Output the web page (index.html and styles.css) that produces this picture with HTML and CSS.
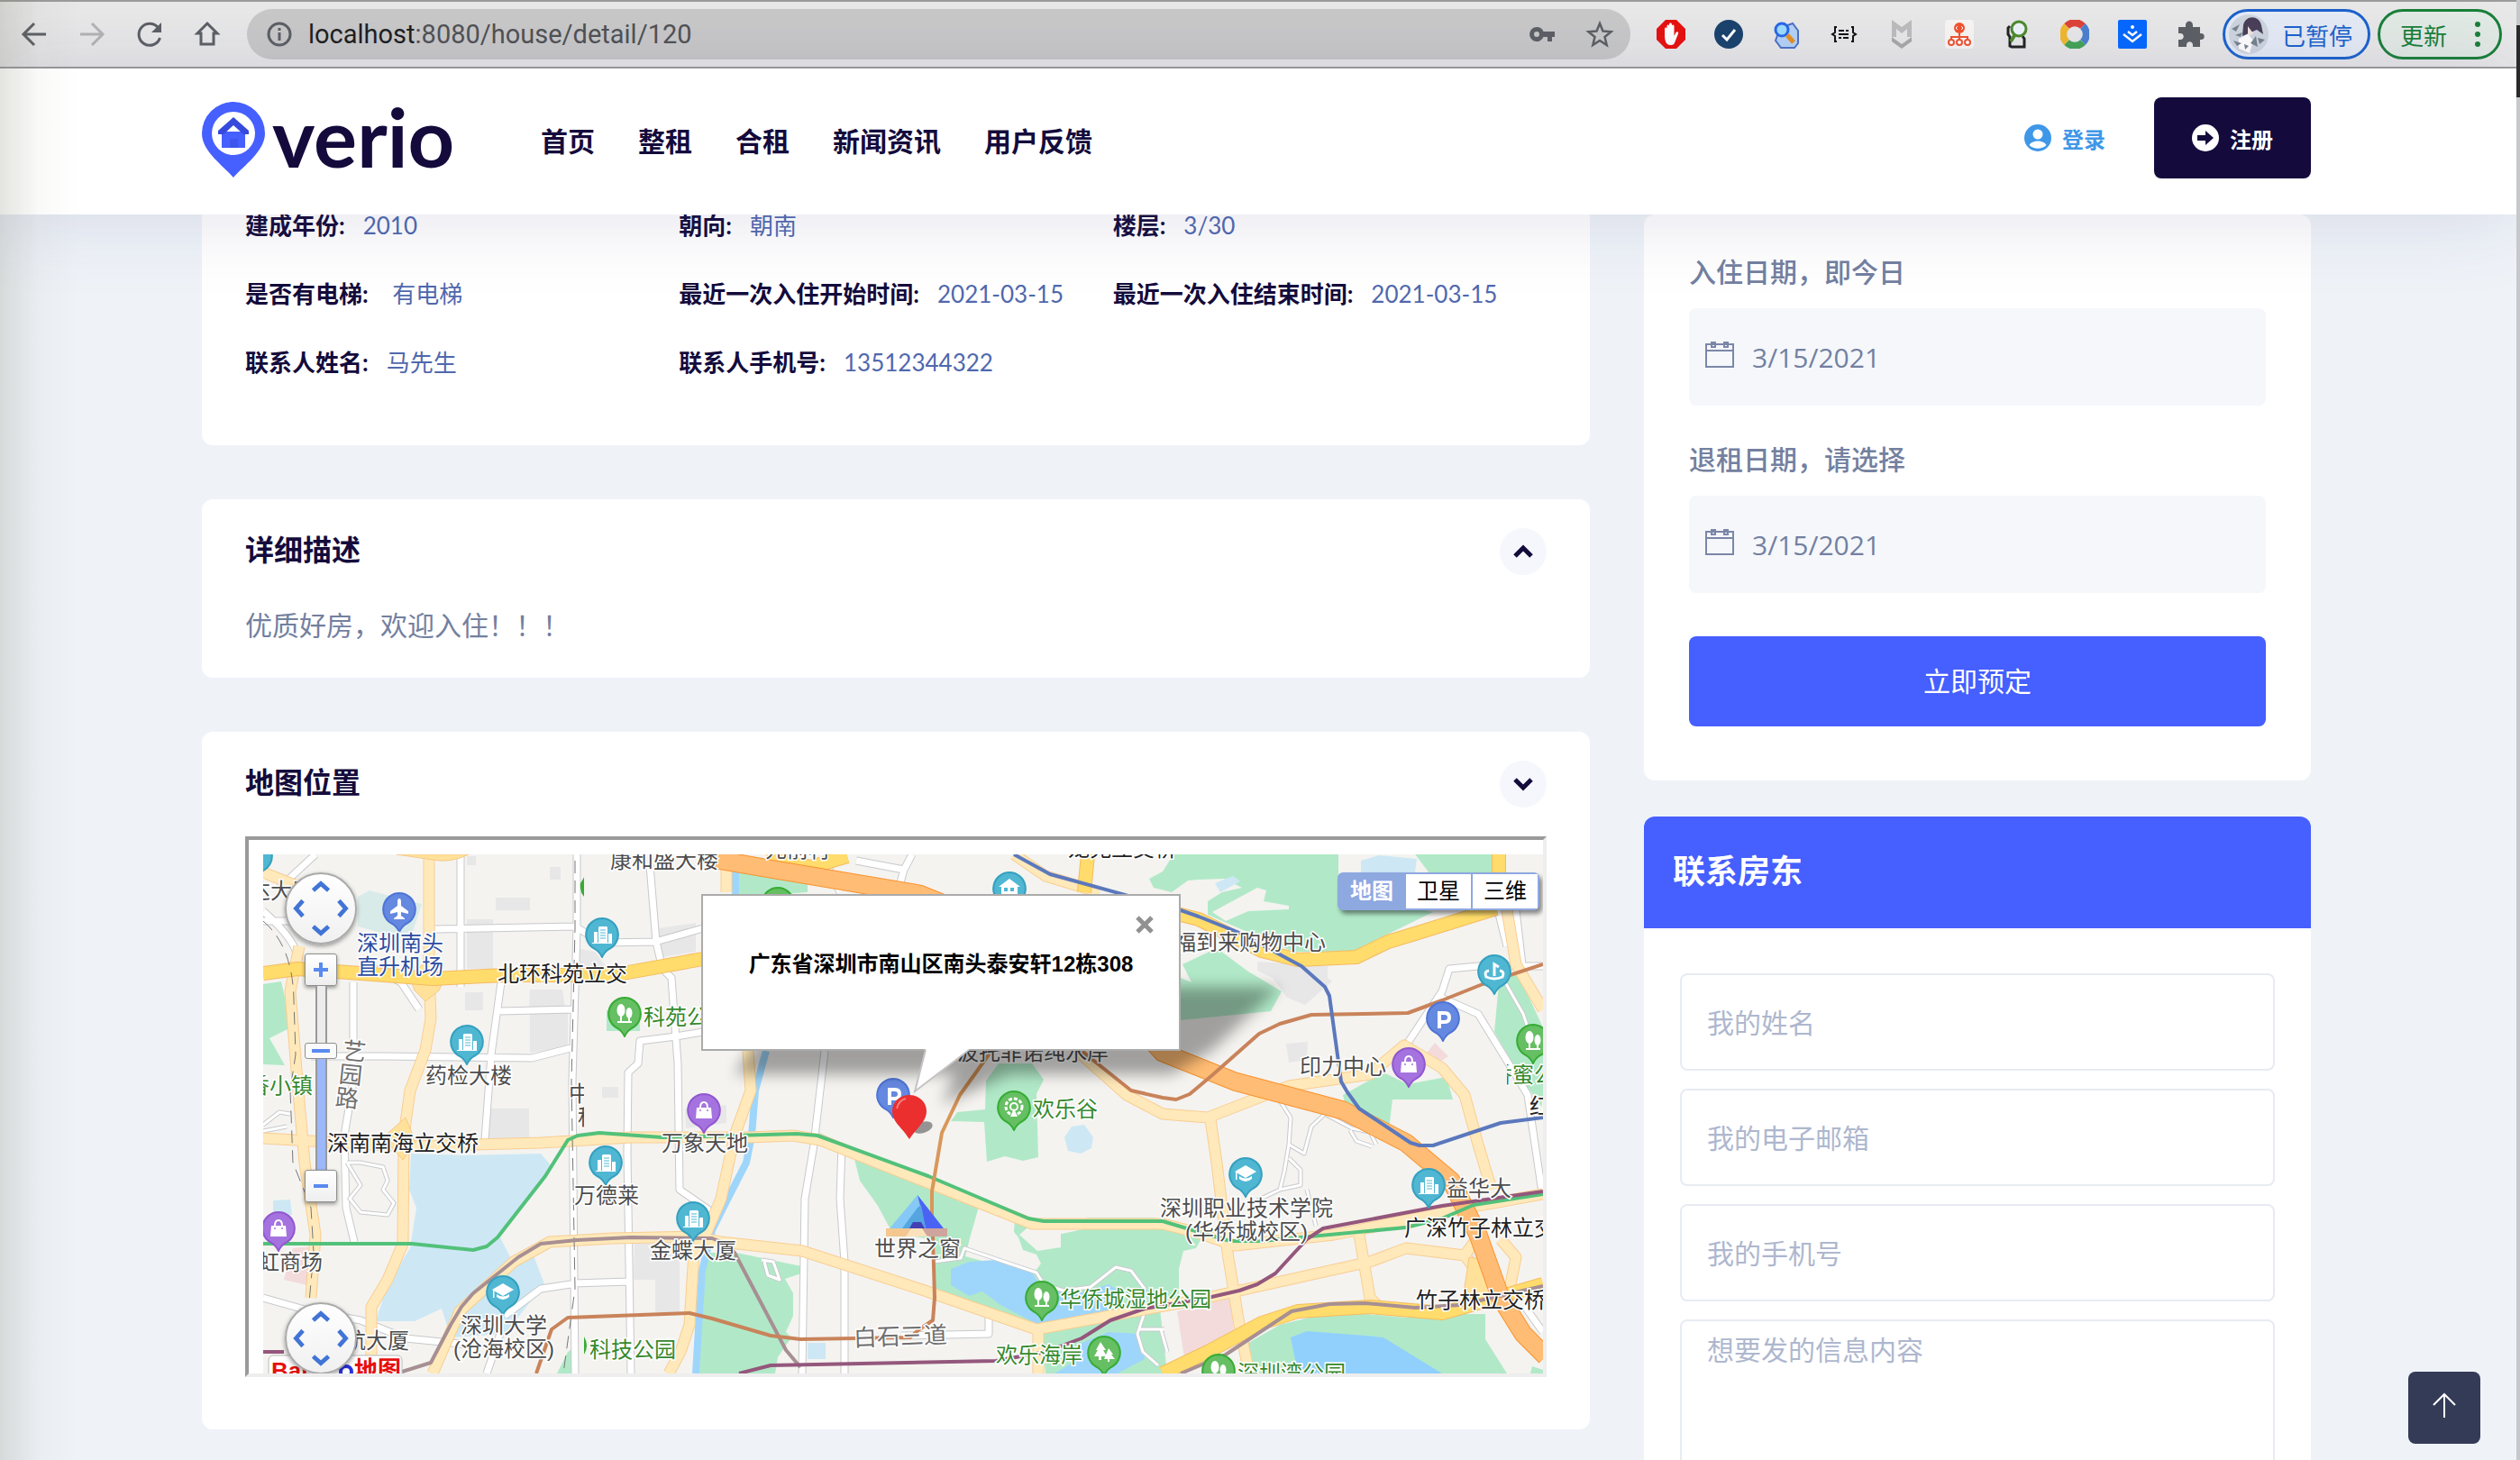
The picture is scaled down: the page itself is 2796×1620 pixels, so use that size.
FILE: index.html
```html
<!DOCTYPE html>
<html lang="zh-CN">
<head>
  <meta charset="utf-8">
  <title>Overio - 房屋详情</title>
  <meta name="viewport" content="width=device-width, initial-scale=1">
  <link rel="stylesheet" href="styles.css">
</head>
<body>
<div class="browser">
  <button class="tool" aria-label="后退"><svg viewBox="0 0 32 32"><path d="M29 16H5M16 4L4 16l12 12" fill="none" stroke="#5c5f63" stroke-width="3"/></svg></button>
  <button class="tool" aria-label="前进"><svg viewBox="0 0 32 32"><path d="M3 16h24M16 4l12 12-12 12" fill="none" stroke="#b3b4b6" stroke-width="3"/></svg></button>
  <button class="tool" aria-label="刷新"><svg viewBox="0 0 32 32"><path d="M26 9.500A12 12 0 1 0 27.500 20" fill="none" stroke="#5c5f63" stroke-width="3"/><path d="M29 3v11H18z" fill="#5c5f63"/></svg></button>
  <button class="tool" aria-label="主页"><svg viewBox="0 0 32 32"><path d="M16 4L5 15h4v12h14V15h4z" fill="none" stroke="#5c5f63" stroke-width="3"/></svg></button>
  <div class="address">
    <svg class="icon" viewBox="0 0 32 32"><circle cx="16" cy="16" r="12" fill="none" stroke="#5c5f63" stroke-width="3"/><path d="M16 14v9M16 9v3" stroke="#5c5f63" stroke-width="3"/></svg>
    <span class="url"><b>localhost</b>:8080/house/detail/120</span>
    <svg class="icon" viewBox="0 0 32 32"><path d="M10 8a8 8 0 1 0 7.500 11H22v5h5v-5h3v-6H17.500A8 8 0 0 0 10 8zm0 5a3 3 0 1 1 0 6 3 3 0 0 1 0-6z" fill="#5c5f63"/></svg>
    <svg class="icon star" viewBox="0 0 32 32"><path d="M16 4l3.500 8.500 9 .7-7 5.800 2.200 9L16 23l-7.700 5 2.200-9-7-5.800 9-.7z" fill="none" stroke="#5c5f63" stroke-width="2.500"/></svg>
  </div>
  <div class="extensions">
    <svg viewBox="0 0 32 32"><path d="M10 0h12l10 10v12L22 32H10L0 22V10z" fill="#e8100c"/><path d="M9 17V10c0-2 2.500-2 2.500 0v5V7c0-2 2.500-2 2.500 0v8V5c0-2 3-2 3 0v10V7c0-2 2.500-2 2.500 0v11l2-4c1-1.500 3.500-1 2.500 1.500l-4 10C19 28 17 28 15 28c-4 0-6-4-6-11z" fill="#fff"/></svg>
    <svg viewBox="0 0 32 32"><circle cx="16" cy="16" r="16" fill="#19426c"/><path d="M9 17l5 5 9-11" fill="none" stroke="#fff" stroke-width="3"/></svg>
    <svg viewBox="0 0 32 32"><path d="M9 9l14-5 6 8v14l-4 5H10l-6-8z" fill="#b5d3f7" stroke="#4c72c4" stroke-width="2"/><circle cx="11" cy="11" r="7" fill="#9fdcff" stroke="#2868e8" stroke-width="3"/><path d="M17 17l7 8" stroke="#e79020" stroke-width="5"/></svg>
    <svg viewBox="0 0 32 32"><path d="M8 8H6v6l-3 2 3 2v6h2M24 8h2v6l3 2-3 2v6h-2M10 12h6M18 12h3M10 16h11M10 20h3M15 20h6" fill="none" stroke="#111" stroke-width="2"/></svg>
    <svg viewBox="0 0 32 32"><path d="M5 0l11 8L27 0v19h-5V10l-6 5-6-5v9H5z" fill="#bdbdbd"/><path d="M5 19l11 8 11-8v5l-11 8-11-8z" fill="#a9a9a9"/></svg>
    <svg viewBox="0 0 32 32"><rect width="32" height="32" rx="4" fill="#f9f7f4"/><circle cx="16" cy="9" r="6" fill="#f3532e"/><path d="M16 14v9M7 23v-4h18v4" fill="none" stroke="#f3532e" stroke-width="2"/><g fill="#fff" stroke="#f3532e" stroke-width="2"><circle cx="7" cy="25" r="3"/><circle cx="16" cy="25" r="3"/><circle cx="25" cy="25" r="3"/></g><path d="M14 7l-2 2 2 2M18 7l2 2-2 2" fill="none" stroke="#fff"/></svg>
    <svg viewBox="0 0 32 32"><path d="M8 7L6 9v7l2 3v10l2 1h14v-9l-2-3" fill="none" stroke="#222" stroke-width="3"/><path d="M14 16l-5 8" stroke="#4b8b2a" stroke-width="4"/><circle cx="18" cy="10" r="8" fill="#edf4fa" stroke="#4b8b2a" stroke-width="3"/></svg>
    <svg viewBox="0 0 32 32" fill="none" stroke-width="8"><path d="M7 7a12.500 12.500 0 0 1 18 0" stroke="#df4238"/><path d="M25 7a12.500 12.500 0 0 1 0 18" stroke="#4c80cf"/><path d="M25 25a12.500 12.500 0 0 1-18 0" stroke="#44a355"/><path d="M7 25A12.500 12.500 0 0 1 7 7" stroke="#f2b92e"/></svg>
    <svg viewBox="0 0 32 32"><rect width="32" height="32" rx="2" fill="#0468ff"/><path d="M6 16l10 8 10-8M11 13l5 4 5-4" fill="none" stroke="#fff" stroke-width="2.500"/><circle cx="16" cy="8" r="2" fill="#fff"/></svg>
    <svg viewBox="0 0 32 32"><path d="M3 8h8V6c0-6 8-6 8 0v2h8v7h1c5 0 5 7 0 7h-1v8h-8v-2c0-5-7-5-7 0v2H3v-8h2c5 0 5-7 0-7H3z" fill="#5c5f63"/></svg>
  </div>
  <button class="pill paused">
    <svg viewBox="0 0 46 46"><circle cx="23" cy="23" r="22" fill="#cfd6df"/><path d="M17 13c2-11 17-12 20 0l2 10-7-5-9 4-7 3z" fill="#493f58"/><path d="M22 14l6 8-6 4z" fill="#f4e4e2"/><path d="M12 28l10-5 6 7-4 14-12-5z" fill="#fff"/><path d="M4 17l9-5-4 8zM6 30l9 3-5 3zM25 33l6-8 2 12zM8 24l8-3-2 5zM33 27l8 2-6 5zM18 34l5 2-4 4z" fill="#77838d"/></svg>
    已暂停
  </button>
  <button class="pill update">更新<svg viewBox="0 0 8 32"><circle cx="4" cy="5" r="3"/><circle cx="4" cy="16" r="3"/><circle cx="4" cy="27" r="3"/></svg></button>
</div>

<header class="header">
  <a class="logo" href="#" aria-label="Overio">
    <svg viewBox="0 0 70 84"><path d="M35 0a35 35 0 0 1 35 35c0 20-24 36-35 49C24 71 0 55 0 35A35 35 0 0 1 35 0z" fill="#465fff"/><circle cx="35" cy="35" r="24" fill="#fff"/><path d="M22 33h26v18H22z" fill="#465fff"/><path d="M35 17l17 15v4h-6L35 26 24 36h-6v-4z" fill="#3649dc"/><path d="M31 41h9v10h-9z" fill="#3f55ee"/></svg>
    <span>verio</span>
  </a>
  <nav class="nav">
    <a href="#">首页</a>
    <a href="#">整租</a>
    <a href="#">合租</a>
    <a href="#">新闻资讯</a>
    <a href="#">用户反馈</a>
  </nav>
  <div class="account">
    <a class="login" href="#"><svg viewBox="0 0 30 30"><circle cx="15" cy="15" r="15" fill="#3f97e8"/><circle cx="15" cy="11" r="5.500" fill="#fff"/><path d="M5.500 23c3-6 16-6 19 0-5 5-14 5-19 0z" fill="#fff"/></svg>登录</a>
    <a class="register" href="#"><svg viewBox="0 0 30 30"><circle cx="15" cy="15" r="15" fill="#fff"/><path d="M6 12h9V7l9 8-9 8v-5H6z" fill="#140b3c"/></svg>注册</a>
  </div>
</header>

<main class="page">
  <div class="content">
    <section class="card info">
      <dl>
        <div><dt>建成年份:</dt><dd>2010</dd></div>
        <div><dt>朝向:</dt><dd>朝南</dd></div>
        <div><dt>楼层:</dt><dd>3/30</dd></div>
        <div><dt>是否有电梯:</dt><dd>&nbsp;有电梯</dd></div>
        <div><dt>最近一次入住开始时间:</dt><dd>2021-03-15</dd></div>
        <div><dt>最近一次入住结束时间:</dt><dd>2021-03-15</dd></div>
        <div><dt>联系人姓名:</dt><dd>马先生</dd></div>
        <div><dt>联系人手机号:</dt><dd>13512344322</dd></div>
      </dl>
    </section>

    <section class="card">
      <div class="card-head">
        <h2>详细描述</h2>
        <button class="toggle" aria-label="收起"><svg viewBox="0 0 24 24"><path d="M3 17l9-9 9 9" fill="none" stroke="#140b3c" stroke-width="5"/></svg></button>
      </div>
      <p class="desc">优质好房，欢迎入住！！！</p>
    </section>

    <section class="card">
      <div class="card-head">
        <h2>地图位置</h2>
        <button class="toggle" aria-label="展开"><svg viewBox="0 0 24 24"><path d="M3 7l9 9 9-9" fill="none" stroke="#140b3c" stroke-width="5"/></svg></button>
      </div>
      <div class="map-frame">
        <div class="map">
          <svg class="map-canvas" viewBox="292 948 1420 576" preserveAspectRatio="xMinYMin slice">
            <defs>
              <path id="white" d="M511 948V1095M470 1100L483 1100M483 1031L638 1028 668 1046 727 1045 780 1030M721 960L728 1045 735 1075 745 1085 752 1180 754 1320 790 1345M392 1090V1200L382 1260 384 1340 393 1378M556 1090L545 1170 538 1265M555 1122L635 1120M345 1172L425 1172 590 1174 633 1163M780 1145L750 1150 710 1155 708 1180 697 1190 696 1280 700 1524M637 1424L698 1422M560 1460L600 1430 640 1424M540 1524L555 1480M292 1440L345 1455 400 1465 450 1485 500 1490 520 1492M915 1166L903 1270 893 1330 890 1524M934 1270L932 1330 937 1400V1524M905 1260L945 1278M1000 1482L1097 1480V1460M950 955L1003 965 1012 948M1003 965L996 990M920 965L932 990M1560 1160L1600 1100 1608 1075 1640 1072H1712M1595 1105L1640 1125 1680 1190 1695 1215 1712 1330M1662 1010L1672 1050M1682 1010L1690 1080M1692 1450L1712 1478M350 948L310 985M292 1022H330M292 1011Q325 1040 330 1060M640 948V1030L635 1200 638 1524M402 1068L445 1090 465 1120"/>
              <path id="lane" d="M1418 1218L1432 1240 1430 1270 1425 1300 1420 1320 1395 1332M1430 1270L1447 1280 1455 1250 1470 1236 1500 1252 1520 1256 1527 1270M1498 1254L1505 1266 1522 1272M1430 1285L1443 1298V1315L1420 1320M1036 1400L1066 1396 1070 1385 1120 1402 1150 1412 1158 1425 1180 1432 1210 1428 1238 1406 1255 1410 1270 1430 1268 1445M385 1290L400 1290 425 1295 430 1310 425 1320 437 1335 430 1348 400 1345 388 1330 400 1315 385 1290M292 1248L310 1234 322 1236M292 1255L318 1250M845 1398L858 1400 865 1420 852 1415 848 1400M1272 1450L1262 1480 1268 1500 1285 1515M1264 1475H1292M1288 1475L1295 1500M1670 1090L1690 1125 1705 1170M1450 1320L1460 1360"/>
              <path id="pale" d="M476 948V1080L478 1130 472 1165 455 1210 448 1260 447 1380 430 1420 412 1450V1510M332 1050L322 1100 330 1200 338 1290 350 1370 345 1440M292 1263L450 1272 600 1268 700 1262 830 1262 880 1260 910 1265 1145 1358H1290L1330 1368 1370 1382 1480 1370 1640 1338 1712 1325M292 968L335 985M480 1524L510 1455 570 1400 610 1378 680 1374 770 1372 800 1378 890 1388 1020 1430 1150 1475 1330 1442 1520 1400 1560 1385 1625 1393M830 1166L833 1210 815 1260 800 1330 785 1365 770 1390 765 1470 755 1500 742 1524M1152 1475V1524M1343 1242L1350 1290 1362 1390 1375 1470 1386 1524M1195 1166L1250 1215 1290 1236 1340 1240 1430 1205 1520 1192 1558 1160 1600 1185 1625 1215 1640 1270 1655 1320M1508 1370L1520 1440 1530 1450M1672 1010L1682 1070 1712 1120M806 948V990M1625 1393L1640 1372M1625 1393L1645 1420 1665 1430M1665 1375L1682 1395 1675 1430M1125 948L1160 972 1220 990"/>
              <path id="main" d="M292 1080L330 1075 400 1080 480 1086 560 1082 680 1082 780 1064M1290 1010L1330 1020 1400 1055 1440 1065 1505 1062 1540 1045 1570 1036 1660 1008M1663 948V970M1207 948L1203 990M850 952L900 962 940 950M1290 1524L1340 1500 1400 1468 1440 1455 1520 1450 1600 1457 1650 1443 1712 1425"/>
              <path id="express" d="M790 953L860 965 1020 992 1190 1060 1290 1168 1370 1200 1490 1232 1560 1268 1610 1310 1640 1370 1665 1440 1690 1480 1715 1505"/>
              <filter id="soft" x="-20%" y="-50%" width="140%" height="200%"><feGaussianBlur stdDeviation="8"/></filter>
              <g id="pin"><path d="M0-18A18 18 0 0 1 7 16.500Q3 19 0 25-3 19-7 16.500A18 18 0 0 1 0-18z"/></g>
              <g id="building" fill="#fff"><path d="M-3-9h8l1 1V9H-4V-8zM-9-3h4V9h-4zM7-1h4V9H7zM-11 9h22v1h-22z"/><path d="M-2-5h6M-2-2h6M-2 1h6M-2 4h6" stroke="#50b7d3"/></g>
              <g id="bag"><path d="M-8-3H8L9 9H-9z" fill="#fff"/><path d="M-4-3c0-8 8-8 8 0" fill="none" stroke="#fff" stroke-width="2"/><circle cx="-4" cy="0" r="1" fill="#a573df"/><circle cx="4" cy="0" r="1" fill="#a573df"/></g>
              <g id="tree" fill="#fff"><ellipse cx="-4" cy="-4" rx="4.500" ry="7"/><ellipse cx="5" cy="-1" rx="3.500" ry="6"/><path d="M-5 0h2v8h7V3h2v5h2v2H-8V8h3z"/></g>
              <g id="school" fill="#fff"><path d="M0-10L12-3 0 4-12-3z"/><path d="M-7 2q7 5 14 0v3q-7 6-14 0zM-11-2h1.500v8H-11z"/></g>
              <clipPath id="tile"><path d="M292 948h356v576H292z"/></clipPath>
              <clipPath id="tile2"><path d="M1672 1160h40v60h-40z"/></clipPath>
            </defs>

            <path d="M292 948h1420v576H292z" fill="#f4f3f0"/>
            <!-- built-up blocks -->
            <path fill="#e7e7e8" d="M518 1020h29v55h-29zM550 996h38v14h-38zM516 1101h20v20h-20zM588 1098h36l3 20h-40zM588 1122h42v40l-42 6zM542 1230h45v34h-45zM730 1030l42-6v32l-38 6zM640 1052l20 4 15 20h-35zM704 1380h50v76h-27v-36h-24zM610 962h12v14h-12zM518 950h10v10h-10zM1395 1067l78 5v13l5 4-30 26-20-8-16-22-17-8zM1427 1158l24-2-1 20-20 3zM1630 1378l8 20-6 4zM668 1206h18v12h-18zM760 1230l46-4v20l-45 6z"/>
            <!-- parks -->
            <path fill="#b1e9c8" d="M292 1092l20-3 9 40v12l-22 11 17 30-24-1zM673 1121h37v23h-37zM816 960l80 15v15l-80 6zM947 1282l12 0 129 50-12 42-5 20 75 20 9-12-5-10-15-5-5-14-5-6 1-14 10-5 24 25 46-10v-12l74 0 56 18-9 16-14 3-5 20 0 42-140 28-130-42v-60l-48-8-16-30-20-28zM1108 1180h37l13 18-8 16 2 70-17 4-20-5-20 6-3-44-37-1 7-10 31-3 1-32zM1155 1480l132-28 8 72h-135zM780 1390l37 0 72 15v8l-18 6 9 16v25l-8 18 6 6-15 22-3 18h-85zM786 1410h20l-20 114h-14zM630 1500l-12 24h18V1496zM1302 948h183v37l75 20 30 7-90 44h-65l-95-41v-15l16-10 22-5-20-10-28 1-12 1-18 13-20-5-5-10 15-8zM1570 948h85l5 20h-75zM1310 1085l12 5-10-20 38-18 35 26 37 22-12 22-20 2-80 8zM1490 1215l45-25 27 13 43-8 7 25h-67l-5 42-45-25zM1664 1080l20 0 28 60v90l-22-30-32-55zM1385 1490l35-20 60-15 80 7 40-4h48v28l24 38h-285zM1700 1516l12 4v4h-14z"/>
            <path fill="#f4f3f0" d="M1345 1012l50-27 10 3-3 12 28 5v4l-45 2-25 11zM1485 948h85l15 20h-30l-25-5-45 5zM1145 1358l32 4v22l-26 4-20-18z"/>
            <path fill="#d8ebe9" d="M397 995l13-7 45 12 13 3-11 34-17 3-43-12z"/>
            <path fill="#f3dbdb" d="M325 1385l20-2v44l-30-7zM1306 1455l60-15 3 40-54 33zM1592 1157l15 15-12 8-15-8z"/>
            <!-- water -->
            <path fill="#cde8f4" d="M456 1280l59 2 85-2 12 14-57 79 11 22 24-7 14 37-44 55-60 4-10-32-30 14h-43l13-41 25-40 7-45-8-20zM303 1332l19-1 2 17-21 2zM1181 1262l8-12 14-2 10 14-2 12-12 6-14-3zM896 1490h20v18h-20zM1510 955l20-6 42 4-2 15h-60zM1348 980l20-8 8 6-22 12z"/>
            <path fill="#9ed6fb" d="M1055 1408l20-8 30-2 40 14 10 15 35 10 40-12 15 10-8 16-45 13-40 6-42-22-20-15-15 5-20-12zM1200 1490l30-12 35 2 5 28-30 16h-70l20-12z"/>
            <path fill="#91d0fd" d="M1432 1484l18-7 65 5 20 2 65 40h-160z"/>
            <path fill="none" stroke="#9ed6fb" stroke-width="8" d="M816 960V998M850 1166L838 1210 834 1260 828 1290 805 1335 790 1365 779 1410 772 1524"/>

            <use href="#white" class="white-case"/><use href="#white" class="white"/>
            <use href="#lane" class="lane-case"/><use href="#lane" class="lane"/>
            <use href="#pale" class="pale-case"/><use href="#pale" class="pale"/>
            <path d="M455 1085l20-22 20 20-8 16-15 12-12-12zM450 1240l-25 22 22 25 14-20zM440 948h80q-20 10-40 6zM1630 1395l30 5-2 45-25 8-10-12z" fill="#ffe19a" stroke="#f7c889"/>
            <use href="#main" class="main-case"/><use href="#main" class="main"/>
            <use href="#express" class="express-case"/><use href="#express" class="express"/>
            <path class="rail" d="M638 955V1030L634 1200 638 1430 625 1524M292 1022Q325 1050 326 1110L328 1170 322 1210 325 1290 345 1340 348 1390 343 1445"/>

            <!-- metro lines -->
            <g class="metro">
              <path stroke="#a78f93" d="M440 1524L478 1512 500 1470 512 1450 525 1435 575 1395 600 1380 640 1376 700 1373 790 1374 805 1380 815 1390 872 1498 888 1517M1310 1524L1360 1503 1433 1455 1475 1447 1515 1446 1570 1451 1620 1448 1712 1427"/>
              <path stroke="#52c17a" d="M292 1380H457L525 1387 540 1383 552 1373 605 1305 630 1265 641 1260 665 1257 735 1262 780 1261 884 1258 907 1260 1030 1305 1141 1352 1158 1355H1290L1330 1367 1365 1377H1400L1560 1362 1600 1352 1635 1337 1712 1325"/>
              <path stroke="#c9835a" d="M595 1524L612 1475 630 1462 765 1457 790 1463 855 1482 888 1486 1010 1484 1020 1475 1035 1465 1037 1440 1035 1370M1200 1166L1255 1210 1290 1218 1305 1220 1320 1214 1345 1193 1397 1147 1420 1136 1455 1126 1562 1124 1600 1110 1645 1092 1712 1070"/>
              <path stroke="#d9975a" d="M1034 1370V1322L1045 1257 1065 1215 1100 1166"/>
              <path stroke="#94577c" d="M292 1500L315 1500M820 1524L855 1515 1105 1510 1160 1500 1200 1485 1232 1465 1270 1452 1340 1440 1375 1432 1395 1425 1415 1413 1450 1375 1468 1363 1600 1338 1712 1322"/>
              <path stroke="#5b78bd" d="M1125 948L1165 970 1310 1010 1330 1017 1375 1035 1444 1072 1470 1095 1475 1105 1488 1200 1495 1212 1508 1230 1565 1268 1575 1271H1590L1665 1246 1712 1240"/>
            </g>

            <!-- landmark pyramid -->
            <path d="M983 1363h35v9h-35z" fill="#f3c78f"/><path d="M1018 1363h33v9h-33z" fill="#cfa49c"/>
            <path d="M1018 1326l-31 37h40z" fill="#86c9f7"/><path d="M1018 1326l9 37h20z" fill="#4b63f5"/><path d="M1018 1340l-17 23h26l-5-26z" fill="#54a5e0"/>
            <path d="M1009 1363l4-7h9l4 7z" fill="#4340b4"/><path d="M1005 1372l6-9h12l6 9z" fill="#fbe2bd"/>

            <!-- points of interest -->
            <g fill="#50b7d3" stroke="#35a0bf" stroke-width="2">
              <use href="#pin" x="668" y="1037"/><use href="#pin" x="518" y="1156"/><use href="#pin" x="672" y="1290"/><use href="#pin" x="769" y="1352"/><use href="#pin" x="558" y="1434"/><use href="#pin" x="1120" y="986"/><use href="#pin" x="1658" y="1078"/><use href="#pin" x="1382" y="1303"/><use href="#pin" x="1585" y="1315"/><use href="#pin" x="284" y="950"/>
            </g>
            <g fill="#6589e0" stroke="#4f74d6" stroke-width="2"><use href="#pin" x="443" y="1009"/><use href="#pin" x="991" y="1215"/><use href="#pin" x="1601" y="1130"/></g>
            <g fill="#a573df" stroke="#9257d0" stroke-width="2"><use href="#pin" x="781" y="1232"/><use href="#pin" x="309" y="1363"/><use href="#pin" x="1563" y="1181"/></g>
            <g fill="#66bf63" stroke="#37ac35" stroke-width="2"><use href="#pin" x="693" y="1125"/><use href="#pin" x="1125" y="1229"/><use href="#pin" x="863" y="1003"/><use href="#pin" x="1156" y="1440"/><use href="#pin" x="1225" y="1501"/><use href="#pin" x="1701" y="1155"/><use href="#pin" x="1352" y="1521"/></g>
            <use href="#building" x="668" y="1037"/><use href="#building" x="518" y="1156"/><use href="#building" x="672" y="1290"/><use href="#building" x="769" y="1352"/><use href="#building" x="1585" y="1315"/>
            <use href="#bag" x="781" y="1232"/><use href="#bag" x="309" y="1363"/><use href="#bag" x="1563" y="1181"/>
            <use href="#tree" x="693" y="1125"/><use href="#tree" x="1156" y="1440"/><use href="#tree" x="1701" y="1155"/><use href="#tree" x="1352" y="1521"/>
            <use href="#school" x="558" y="1434"/><use href="#school" x="1382" y="1303"/>
            <path d="M443 997q2 0 2 4v4l8 6v3l-8-2v4l4 3v1h-12v-1l4-3v-4l-8 2v-3l8-6v-4q0-4 2-4z" fill="#fff"/>
            <path d="M1120 975l12 9h-3v12h-18v-12h-3z" fill="#fff"/><path d="M1114 985h4v4h-4zM1121 985h4v4h-4z" fill="#50b7d3"/>
            <g fill="none" stroke="#fff" stroke-width="4"><path d="M987 1226v-17h6q5 0 5 5t-5 5h-5M1597 1141v-17h6q5 0 5 5t-5 5h-5"/><path d="M1652 1077q-6 1-3 7 9 4 18 0 3-6-3-7M1658 1083v-13l5 3" stroke-width="3"/></g>
            <circle cx="1125" cy="1228" r="9" fill="none" stroke="#fff" stroke-width="3" stroke-dasharray="4 2"/><circle cx="1125" cy="1228" r="4" fill="none" stroke="#fff" stroke-width="2"/><path d="M1125 1230l4 9h-8z" fill="#fff"/>
            <path d="M1221 1489l6 9h-3l4 7h-6v4h-3v-4h-5l4-7h-2zM1230 1496l5 7h-2l4 5h-6v3h-2v-3h-4z" fill="#fff"/>
            <path d="M644 980q4-6 4-7v22q-5-6-4-15zM648 1483q6 10 0 20z" fill="#37ac35"/>

            <g class="label">
              <text x="677" y="963">康和盛大楼</text><text x="276" y="997">达大厦</text>
              <text x="472" y="1202">药检大楼</text><text x="734" y="1277">万象天地</text><text x="637" y="1335">万德莱</text><text x="721" y="1396">金蝶大厦</text>
              <text x="286" y="1409">虹商场</text><text x="511" y="1479">深圳大学</text><text x="503" y="1505">(沧海校区)</text><text x="382" y="1496">航大厦</text>
              <text x="970" y="1394">世界之窗</text><text x="1062" y="1176">波托菲诺纯水岸</text><text x="1287" y="1349">深圳职业技术学院</text><text x="1315" y="1375">(华侨城校区)</text>
              <text x="1605" y="1327">益华大</text><text x="1279" y="1054">幸福到来购物中心</text><text x="1442" y="1192">印力中心</text><text x="849" y="951">元前村</text>
              <g clip-path="url(#tile)"><text x="631" y="1222">中</text><text x="641" y="1248">科</text></g>
            </g>
            <g class="label road-name">
              <text x="380" y="1176" transform="rotate(6 393 1167)">艺</text><text x="376" y="1202" transform="rotate(6 389 1193)">园</text><text x="372" y="1228" transform="rotate(6 385 1219)">路</text>
              <text x="947" y="1492" transform="rotate(-2 997 1484)">白石三道</text>
            </g>
            <g class="label dark"><text x="552" y="1089">北环科苑立交</text><text x="363" y="1277">深南南海立交桥</text><text x="1558" y="1371">广深竹子林立交桥</text><text x="1571" y="1451">竹子林立交桥</text><text x="1185" y="950">龙苑立交桥</text><text x="1697" y="1236">红</text></g>
            <g class="label green"><text x="714" y="1137">科苑公园</text><text x="275" y="1213">香小镇</text><text x="654" y="1506">科技公园</text><text x="1146" y="1239">欢乐谷</text><text x="1176" y="1450">华侨城湿地公园</text><text x="1105" y="1512">欢乐海岸</text><text x="1373" y="1532">深圳湾公园</text><text x="1654" y="1201" clip-path="url(#tile2)">香蜜公园</text></g>
            <g class="label blue"><text x="396" y="1055">深圳南头</text><text x="396" y="1081">直升机场</text></g>

            <!-- bubble shadow, tail and marker -->
            <path d="M815 1192L880 1095H1420L1345 1165 1300 1192H1120L1045 1225 1060 1192z" fill="#000" opacity=".34" filter="url(#soft)"/>
            <ellipse cx="1024" cy="1251" rx="11" ry="6" fill="#555" opacity=".6" transform="rotate(-18 1024 1251)"/>
            <path d="M1009 1215c11 0 19 8 19 18 0 12-11 18-19 31-8-13-19-19-19-31 0-10 8-18 19-18z" fill="#eb2e2e"/>
            <path d="M995 1230q2-9 10-11" fill="none" stroke="#f57d7a" stroke-width="2"/>
            <!-- provider logo -->
            <rect x="298" y="1504" width="148" height="40" rx="5" fill="#fff" stroke="#bbb"/>
            <g class="provider"><text x="301" y="1530">Bai</text><text x="393" y="1529">地图</text></g>
            <circle cx="384" cy="1522" r="6" fill="none" stroke="#2a32e0" stroke-width="4"/>
          </svg>

          <div class="bubble">
            <button aria-label="关闭"><svg viewBox="0 0 20 20"><path d="M2 2l16 16M18 2L2 18" stroke="#919191" stroke-width="5"/></svg></button>
            <p>广东省深圳市南山区南头泰安轩12栋308</p>
            <svg class="tail" viewBox="0 0 64 50"><path d="M14 0h50L2 48z" fill="#fff"/><path d="M14 2L2 48 62 2" fill="none" stroke="#c4c4c4" stroke-width="2"/></svg>
          </div>

          <div class="map-types">
            <button class="active">地图</button><button>卫星</button><button>三维</button>
          </div>

          <button class="compass" aria-label="平移"><svg viewBox="0 0 80 80"><path d="M31 19l9-8 9 8M31 61l9 8 9-8M19 31l-8 9 8 9M61 31l8 9-8 9" fill="none" stroke="#4174d6" stroke-width="5"/></svg></button>
          <div class="zoom">
            <button aria-label="放大"><svg viewBox="0 0 20 20"><path d="M2 10h16M10 2v16" stroke="#5a8af0" stroke-width="4"/></svg></button>
            <input type="range" min="0" max="100" value="66" aria-label="缩放级别">
            <button aria-label="缩小"><svg viewBox="0 0 20 20"><path d="M2 10h16" stroke="#5a8af0" stroke-width="4"/></svg></button>
          </div>
          <button class="compass lower" aria-label="平移"><svg viewBox="0 0 80 80"><path d="M31 19l9-8 9 8M31 61l9 8 9-8M19 31l-8 9 8 9M61 31l8 9-8 9" fill="none" stroke="#4174d6" stroke-width="5"/></svg></button>
        </div>
      </div>
    </section>
  </div>

  <aside class="sidebar">
    <form class="card booking">
      <label for="start">入住日期，即今日</label>
      <div class="date">
        <svg viewBox="0 0 32 32"><path d="M1 4h30v25H1zM1 11h30M7 2h4v5H7zM21 2h4v5h-4z" fill="none" stroke="#7c87a8" stroke-width="2"/></svg>
        <input id="start" type="text" value="3/15/2021">
      </div>
      <label for="end">退租日期，请选择</label>
      <div class="date">
        <svg viewBox="0 0 32 32"><path d="M1 4h30v25H1zM1 11h30M7 2h4v5H7zM21 2h4v5h-4z" fill="none" stroke="#7c87a8" stroke-width="2"/></svg>
        <input id="end" type="text" value="3/15/2021">
      </div>
      <button class="book" type="button">立即预定</button>
    </form>

    <form class="card contact">
      <h2>联系房东</h2>
      <div class="fields">
        <input type="text" placeholder="我的姓名" aria-label="我的姓名">
        <input type="email" placeholder="我的电子邮箱" aria-label="我的电子邮箱">
        <input type="tel" placeholder="我的手机号" aria-label="我的手机号">
        <textarea placeholder="想要发的信息内容" aria-label="想要发的信息内容"></textarea>
      </div>
    </form>
  </aside>
</main>

<button class="to-top" aria-label="返回顶部"><svg viewBox="0 0 28 28"><path d="M14 28V2M2 14L14 2l12 12" fill="none" stroke="#fff" stroke-width="2"/></svg></button>
</body>
</html>
```

FILE: styles.css
```css
* {
  box-sizing: border-box;
  margin: 0;
  padding: 0;
}

html, body {
  height: 100%;
}

body {
  overflow: hidden;
  background-color: #eff3f8;
  border-right: 4px solid #c6c8cb;
  font-family: Lato, "Noto Sans CJK SC", sans-serif;
  font-size: 30px;
  color: #73809f;
}

/* soft edge on the left of the window */
body::after {
  content: "";
  position: fixed;
  z-index: 30;
  top: 0;
  bottom: 0;
  left: 0;
  width: 88px;
  background: linear-gradient(to right, rgba(120, 120, 105, 0.2), rgba(120, 120, 105, 0.04) 50%, transparent);
  pointer-events: none;
}

/* scroll thumb */
body::before {
  content: "";
  position: fixed;
  z-index: 30;
  top: 28px;
  right: 0;
  width: 4px;
  height: 80px;
  background-color: #2a2a2c;
}

a {
  color: inherit;
  text-decoration: none;
}

button {
  border: none;
  background: none;
  font: inherit;
  color: inherit;
}

svg {
  display: block;
}

/* browser bar */
.browser {
  display: flex;
  align-items: center;
  height: 76px;
  padding: 0 16px 0 22px;
  background-color: #e9e9e9;
  border-top: 2px solid #9c9c9c;
  border-bottom: 2px solid #9c9c9c;
  font-family: Roboto, "Noto Sans CJK SC", sans-serif;
}

.tool {
  width: 32px;
  margin-right: 32px;
}

.address {
  display: flex;
  flex: 1;
  align-items: center;
  height: 56px;
  margin-left: -4px;
  margin-right: 29px;
  padding: 0 18px 0 20px;
  border-radius: 28px;
  background-color: #c9c9c9;
}

.icon {
  width: 32px;
}

.star {
  margin-left: 32px;
}

.url {
  flex: 1;
  padding-left: 16px;
  font-size: 29px;
  color: #505153;
}

.url b {
  font-weight: normal;
  color: #1d1e20;
}

.extensions {
  display: flex;
  gap: 32px;
  margin-right: 20px;
}

.extensions svg {
  width: 32px;
}

.pill {
  display: flex;
  align-items: center;
  height: 56px;
  border: 3px solid;
  border-radius: 28px;
  font-size: 26px;
}

.paused {
  gap: 14px;
  width: 164px;
  margin-right: 8px;
  padding-left: 3px;
  background-color: #e5ecf6;
  color: #1b62cc;
}

.paused svg {
  width: 46px;
}

.update {
  gap: 30px;
  width: 138px;
  padding-left: 22px;
  background-color: #e3ebe5;
  color: #188038;
}

.update svg {
  width: 8px;
  fill: #188038;
}

/* site header */
.header {
  position: relative;
  z-index: 10;
  display: flex;
  align-items: center;
  height: 162px;
  padding: 0 228px 4px 224px;
  background-color: #fff;
  box-shadow: 0 0 90px rgba(82, 85, 140, 0.18);
  color: #140b3c;
}

.logo {
  display: flex;
  align-items: center;
  width: 376px;
}

.logo svg {
  width: 70px;
}

.logo span {
  margin-left: 8px;
  padding-bottom: 8px;
  font-size: 90px;
  font-weight: bold;
  line-height: 84px;
}

.nav {
  display: flex;
  flex: 1;
  gap: 48px;
  font-weight: bold;
}

.account {
  display: flex;
  align-items: center;
  gap: 54px;
  margin-bottom: 4px;
  font-size: 24px;
  font-weight: bold;
}

.login, .register {
  display: flex;
  align-items: center;
  gap: 12px;
}

.login {
  color: #3f97e8;
}

.account svg {
  width: 30px;
}

.register {
  height: 90px;
  padding: 0 42px;
  border-radius: 8px;
  background-color: #140b3c;
  color: #fff;
}

/* page */
.page {
  display: grid;
  grid-template-columns: 1fr 740px;
  gap: 60px;
  padding: 0 228px 0 224px;
}

.content {
  display: flex;
  flex-direction: column;
  gap: 60px;
}

.card {
  border-radius: 12px;
  background-color: #fff;
}

.content .card {
  padding: 32px 48px 34px;
}

/* scrolled partly under the header */
.content .info {
  margin-top: -26px;
  padding: 0 48px 54px;
}

.info dl {
  display: grid;
  grid-template-columns: repeat(3, 1fr);
  font-size: 26px;
  line-height: 76px;
  white-space: nowrap;
}

.info dl div {
  display: flex;
  gap: 20px;
}

.info dt {
  font-weight: bold;
  color: #140b3c;
}

.info dd {
  color: #5068ae;
}

.card-head {
  display: flex;
  align-items: center;
  justify-content: space-between;
}

.card-head h2 {
  font-size: 32px;
  line-height: 48px;
  padding-bottom: 4px;
  color: #140b3c;
}

.toggle {
  display: flex;
  align-items: center;
  justify-content: center;
  width: 52px;
  height: 52px;
  border-radius: 50%;
  background-color: #f5f7fc;
}

.toggle svg {
  width: 24px;
}

.desc {
  margin-top: 32px;
  padding-bottom: 2px;
  line-height: 46px;
}

/* map */
.map-frame {
  height: 600px;
  margin: 32px 0 24px;
  padding: 16px 0 0 16px;
  border: 4px solid;
  border-color: #9a9a9a #eee #eee #9a9a9a;
}

.map {
  position: relative;
  height: 100%;
  overflow: hidden;
  font-family: "Liberation Sans", "Noto Sans CJK SC", sans-serif;
  font-size: 24px;
  color: #000;
}

.map-canvas {
  width: 100%;
  height: 100%;
}

.map-canvas use, .metro path, .rail {
  stroke-linejoin: round;
}

.white, .white-case, .lane, .lane-case, .pale, .pale-case,
.main, .main-case, .express, .express-case, .metro, .rail {
  fill: none;
}

.white-case { stroke: #c8c9cc; stroke-width: 9px; }
.white { stroke: #fff; stroke-width: 7px; }
.lane-case { stroke: #c8c9cc; stroke-width: 5px; }
.lane { stroke: #fff; stroke-width: 3px; }
.pale-case { stroke: #f9cd92; stroke-width: 13px; }
.pale { stroke: #ffe9ba; stroke-width: 11px; }
.main-case { stroke: #f5bb62; stroke-width: 16px; }
.main { stroke: #ffdc6b; stroke-width: 14px; }
.express-case { stroke: #f9932f; stroke-width: 21px; }
.express { stroke: #ffbc74; stroke-width: 19px; }
.metro { stroke-width: 4px; }
.rail { stroke: #777; stroke-width: 1px; stroke-dasharray: 14px 8px; }

.label {
  fill: #4d4d4d;
  stroke: #fff;
  stroke-width: 3px;
  paint-order: stroke;
}

.road-name { fill: #707070; font-size: 26px; }
.dark { fill: #222; }
.green { fill: #35892c; }
.blue { fill: #2c4c9f; }

.provider {
  fill: #e6100c;
  font-size: 26px;
  font-weight: bold;
}

.bubble {
  position: absolute;
  top: 44px;
  left: 486px;
  width: 532px;
  height: 174px;
  padding-top: 62px;
  border: 2px solid #ababab;
  background-color: #fff;
  font-weight: bold;
  text-align: center;
}

.bubble p {
  line-height: 28px;
}

.bubble button {
  position: absolute;
  top: 22px;
  right: 28px;
  width: 20px;
}

.tail {
  position: absolute;
  top: 169px;
  left: 233px;
  width: 64px;
}

.map-types {
  position: absolute;
  top: 20px;
  right: 4px;
  display: flex;
  gap: 2px;
  padding: 2px;
  border-radius: 6px;
  background-color: #8ea8e0;
  box-shadow: 3px 4px 5px rgba(0, 0, 0, 0.45);
}

.map-types button {
  width: 72px;
  height: 38px;
  background-color: #fff;
  line-height: 36px;
}

.map-types .active {
  background-color: #8ea8e0;
  color: #fff;
  font-weight: bold;
}

.compass {
  position: absolute;
  top: 20px;
  left: 24px;
  width: 80px;
  height: 80px;
  border: 2px solid #aaa;
  border-radius: 50%;
  background: linear-gradient(#fff, #f0f0f0);
  box-shadow: 0 2px 5px rgba(0, 0, 0, 0.4);
}

.lower {
  top: 497px;
}

.zoom {
  position: absolute;
  top: 110px;
  left: 46px;
  display: flex;
  flex-direction: column;
  width: 36px;
}

.zoom button {
  height: 36px;
  padding: 7px;
  border: 1px solid #8f8f8f;
  border-radius: 3px;
  background: linear-gradient(#fff, #eee);
  box-shadow: 0 2px 4px rgba(0, 0, 0, 0.4);
}

.zoom button svg {
  width: 20px;
}

.zoom input {
  appearance: none;
  writing-mode: vertical-lr;
  direction: rtl;
  width: 36px;
  height: 204px;
  background:
    linear-gradient(to right, #999 2px, transparent 2px 11px, #999 11px) center / 13px 100% no-repeat,
    linear-gradient(#ececec 64px, #9cb8fb 64px) center / 13px 100% no-repeat;
}

.zoom input::-webkit-slider-thumb {
  appearance: none;
  width: 36px;
  height: 18px;
  border: 1px solid #8f8f8f;
  border-radius: 3px;
  background:
    linear-gradient(#5a8af0, #5a8af0) center / 20px 4px no-repeat,
    #fafafa;
}

/* sidebar */
.booking {
  display: flex;
  flex-direction: column;
  padding: 40px 50px 60px;
}

.booking label {
  font-weight: 500;
  line-height: 46px;
}

.date {
  display: flex;
  align-items: center;
  gap: 20px;
  height: 108px;
  margin: 18px 0 36px;
  padding: 0 18px;
  border-radius: 8px;
  background-color: #f5f7fb;
}

.date svg {
  width: 32px;
  margin-bottom: 4px;
}

.date input {
  flex: 1;
  border: none;
  background: none;
  font-family: "Open Sans", sans-serif;
  font-size: 30px;
  color: inherit;
}

.book {
  height: 100px;
  margin-top: 12px;
  padding-bottom: 4px;
  border-radius: 8px;
  background-color: #465fff;
  color: #fff;
}

.contact {
  margin-top: 40px;
}

.contact h2 {
  padding: 0 32px 4px;
  border-radius: 12px 12px 0 0;
  background-color: #465fff;
  font-size: 36px;
  line-height: 120px;
  color: #fff;
}

.fields {
  display: flex;
  flex-direction: column;
  gap: 20px;
  padding: 50px 40px;
}

.fields input, .fields textarea {
  height: 108px;
  padding: 0 28px;
  border: 2px solid #e7ebf2;
  border-radius: 8px;
  background-color: #fff;
  font: inherit;
  color: inherit;
}

.fields textarea {
  height: 300px;
  padding-top: 8px;
  resize: none;
}

.fields ::placeholder {
  color: #aeb7ce;
}

.to-top {
  position: fixed;
  z-index: 20;
  right: 44px;
  bottom: 18px;
  width: 80px;
  height: 80px;
  padding: 0 26px 6px;
  border-radius: 8px;
  background-color: #343b57;
}
```
